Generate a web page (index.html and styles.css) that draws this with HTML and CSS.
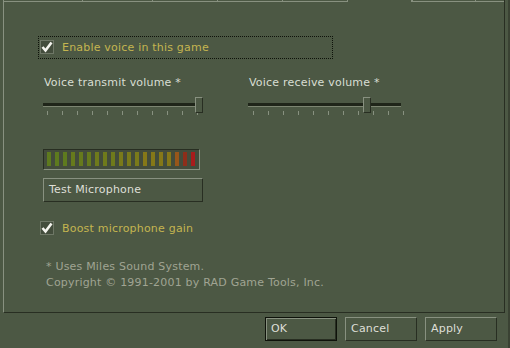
FILE: index.html
```html
<!DOCTYPE html>
<html>
<head>
<meta charset="utf-8">
<link rel="stylesheet" href="styles.css">
</head>
<body>
<div class="window">
  <div class="panel">
    <div class="tabs">
      <span class="tab first"></span>
      <span class="tab w70"></span>
      <span class="tab w65"></span>
      <span class="tab w65"></span>
      <span class="tab w65"></span>
      <span class="tab active"></span>
      <span class="tab w63"></span>
      <span class="tab w29"></span>
    </div>
    <div class="content">
      <label class="check focus">
        <span class="box"><svg width="12" height="12" viewBox="0 0 12 12"><polyline points="1.5,6 4.5,9.5 10.5,1.5" fill="none" stroke="#f4f4ee" stroke-width="2.6"/></svg></span>
        <span class="check-text">Enable voice in this game</span>
      </label>
      <div class="sliders">
        <div class="slider-group">
          <div class="slider-label">Voice transmit volume *</div>
          <div class="slider">
            <div class="track"></div>
            <div class="thumb" style="left:152px"></div>
            <div class="ticks"><i></i><i></i><i></i><i></i><i></i><i></i><i></i><i></i><i></i><i></i><i></i></div>
          </div>
        </div>
        <div class="slider-group">
          <div class="slider-label">Voice receive volume *</div>
          <div class="slider short">
            <div class="track"></div>
            <div class="thumb" style="left:115px"></div>
            <div class="ticks"><i></i><i></i><i></i><i></i><i></i><i></i><i></i><i></i><i></i><i></i><i></i></div>
          </div>
        </div>
      </div>
      <div class="meter">
        <i class="g1"></i><i class="g1"></i><i class="g1"></i><i class="g2"></i><i class="g2"></i><i class="g2"></i><i class="g3"></i><i class="g3"></i><i class="g3"></i><i class="g4"></i><i class="g4"></i><i class="g4"></i><i class="g5"></i><i class="g5"></i><i class="g5"></i><i class="g5"></i><i class="o1"></i><i class="r1"></i><i class="r2"></i>
      </div>
      <div class="btn test">Test Microphone</div>
      <label class="check boost">
        <span class="box"><svg width="12" height="12" viewBox="0 0 12 12"><polyline points="1.5,6 4.5,9.5 10.5,1.5" fill="none" stroke="#f4f4ee" stroke-width="2.6"/></svg></span>
        <span class="check-text">Boost microphone gain</span>
      </label>
      <p class="note">* Uses Miles Sound System.<br>Copyright © 1991-2001 by RAD Game Tools, Inc.</p>
    </div>
  </div>
  <div class="actions">
    <div class="btn default">OK</div>
    <div class="btn">Cancel</div>
    <div class="btn">Apply</div>
  </div>
</div>
</body>
</html>
```

FILE: styles.css
```css
html, body {
  margin: 0;
  padding: 0;
  background: #4c5844;
}
body {
  width: 510px;
  height: 348px;
  overflow: hidden;
  font-family: "DejaVu Sans", sans-serif;
  font-size: 11px;
  line-height: 13px;
  letter-spacing: 0.2px;
  color: #d8ded3;
}
.window {
  width: 508px;
  height: 348px;
  border-right: 2px solid #3a4233;
  display: flex;
  flex-direction: column;
}
.panel {
  margin-left: 3px;
  width: 502px;
  height: 313px;
  box-sizing: border-box;
  border-left: 1px solid #889180;
  border-right: 1px solid #282e22;
  border-bottom: 1px solid #282e22;
  display: flex;
  flex-direction: column;
}
.tabs {
  display: flex;
  height: 2px;
}
.tab {
  box-sizing: border-box;
  height: 2px;
  border-bottom: 1px solid #889180;
  border-left: 1px solid #889180;
}
.tab.first { width: 78px; border-left: none; }
.tab.w70 { width: 70px; }
.tab.w65 { width: 65px; }
.tab.w63 { width: 63px; }
.tab.w29 { width: 29px; }
.tab.active {
  width: 65px;
  border-bottom: none;
  border-right: 1px solid #889180;
}
.content {
  display: flex;
  flex-direction: column;
  align-items: flex-start;
  padding-left: 39px;
}
.check {
  display: flex;
  align-items: center;
  color: #c4b550;
}
.box {
  width: 14px;
  height: 14px;
  box-sizing: border-box;
  border: 1px solid #6e7766;
  background: #434d3c;
  display: flex;
  align-items: center;
  justify-content: center;
}
.check-text {
  margin-left: 8px;
}
.focus {
  margin-top: 34px;
  margin-left: -5px;
  width: 295px;
  height: 23px;
  box-sizing: border-box;
  border: 1px dotted #0e120a;
  padding: 3px 0 4px 1px;
}
.sliders {
  display: flex;
  gap: 47px;
  margin-top: 17px;
}
.slider-group {
  display: flex;
  flex-direction: column;
  width: 158px;
}
.slider-label {
  padding-left: 1px;
}
.slider {
  position: relative;
  margin-top: 8px;
  height: 18px;
}
.track {
  margin-top: 6px;
  height: 4px;
  box-sizing: border-box;
  border-top: 3px solid #1f2519;
  border-bottom: 1px solid #7c8571;
}
.slider.short .track {
  margin-right: 5px;
}
.slider.short .ticks {
  margin: 4px 2px 0 5px;
}
.thumb {
  position: absolute;
  top: 0;
  width: 8px;
  height: 16px;
  box-sizing: border-box;
  background: #4c5844;
  border-top: 1px solid #889180;
  border-left: 1px solid #889180;
  border-right: 1px solid #282e22;
  border-bottom: 1px solid #282e22;
}
.ticks {
  display: flex;
  justify-content: space-between;
  margin: 4px 3px 0 4px;
  height: 4px;
}
.ticks i {
  width: 1px;
  height: 4px;
  background: #889180;
}
.meter {
  margin-top: 34px;
  width: 157px;
  height: 21px;
  box-sizing: border-box;
  border-top: 1px solid #282e22;
  border-left: 1px solid #282e22;
  border-right: 1px solid #889180;
  border-bottom: 1px solid #889180;
  background: #434c3b;
  padding: 2px 0 0 3px;
  display: flex;
  gap: 4px;
}
.meter i {
  width: 4px;
  height: 14px;
}
.meter .g1 { background: #5e7a1e; }
.meter .g2 { background: #667a1c; }
.meter .g3 { background: #6f7a1b; }
.meter .g4 { background: #7a7a1a; }
.meter .g5 { background: #857818; }
.meter .o1 { background: #97561a; }
.meter .r1 { background: #8e2e1a; }
.meter .r2 { background: #a81c1c; }
.btn {
  box-sizing: border-box;
  width: 72px;
  height: 24px;
  padding: 4px 0 0 5px;
  border-top: 1px solid #889180;
  border-left: 1px solid #889180;
  border-right: 1px solid #282e22;
  border-bottom: 1px solid #282e22;
  color: #dedfd7;
}
.btn.test {
  margin-top: 8px;
  width: 160px;
  padding-top: 4px;
}
.boost {
  margin-top: 19px;
  margin-left: -3px;
}
.note {
  margin: 24px 0 0 3px;
  line-height: 16px;
  color: #a0a493;
}
.actions {
  display: flex;
  justify-content: flex-end;
  gap: 8px;
  margin-top: 4px;
  padding-right: 11px;
}
.btn.default {
  border: 1px solid #0e120a;
  box-shadow: inset 1px 1px 0 #889180, inset -1px -1px 0 #282e22;
}
```
